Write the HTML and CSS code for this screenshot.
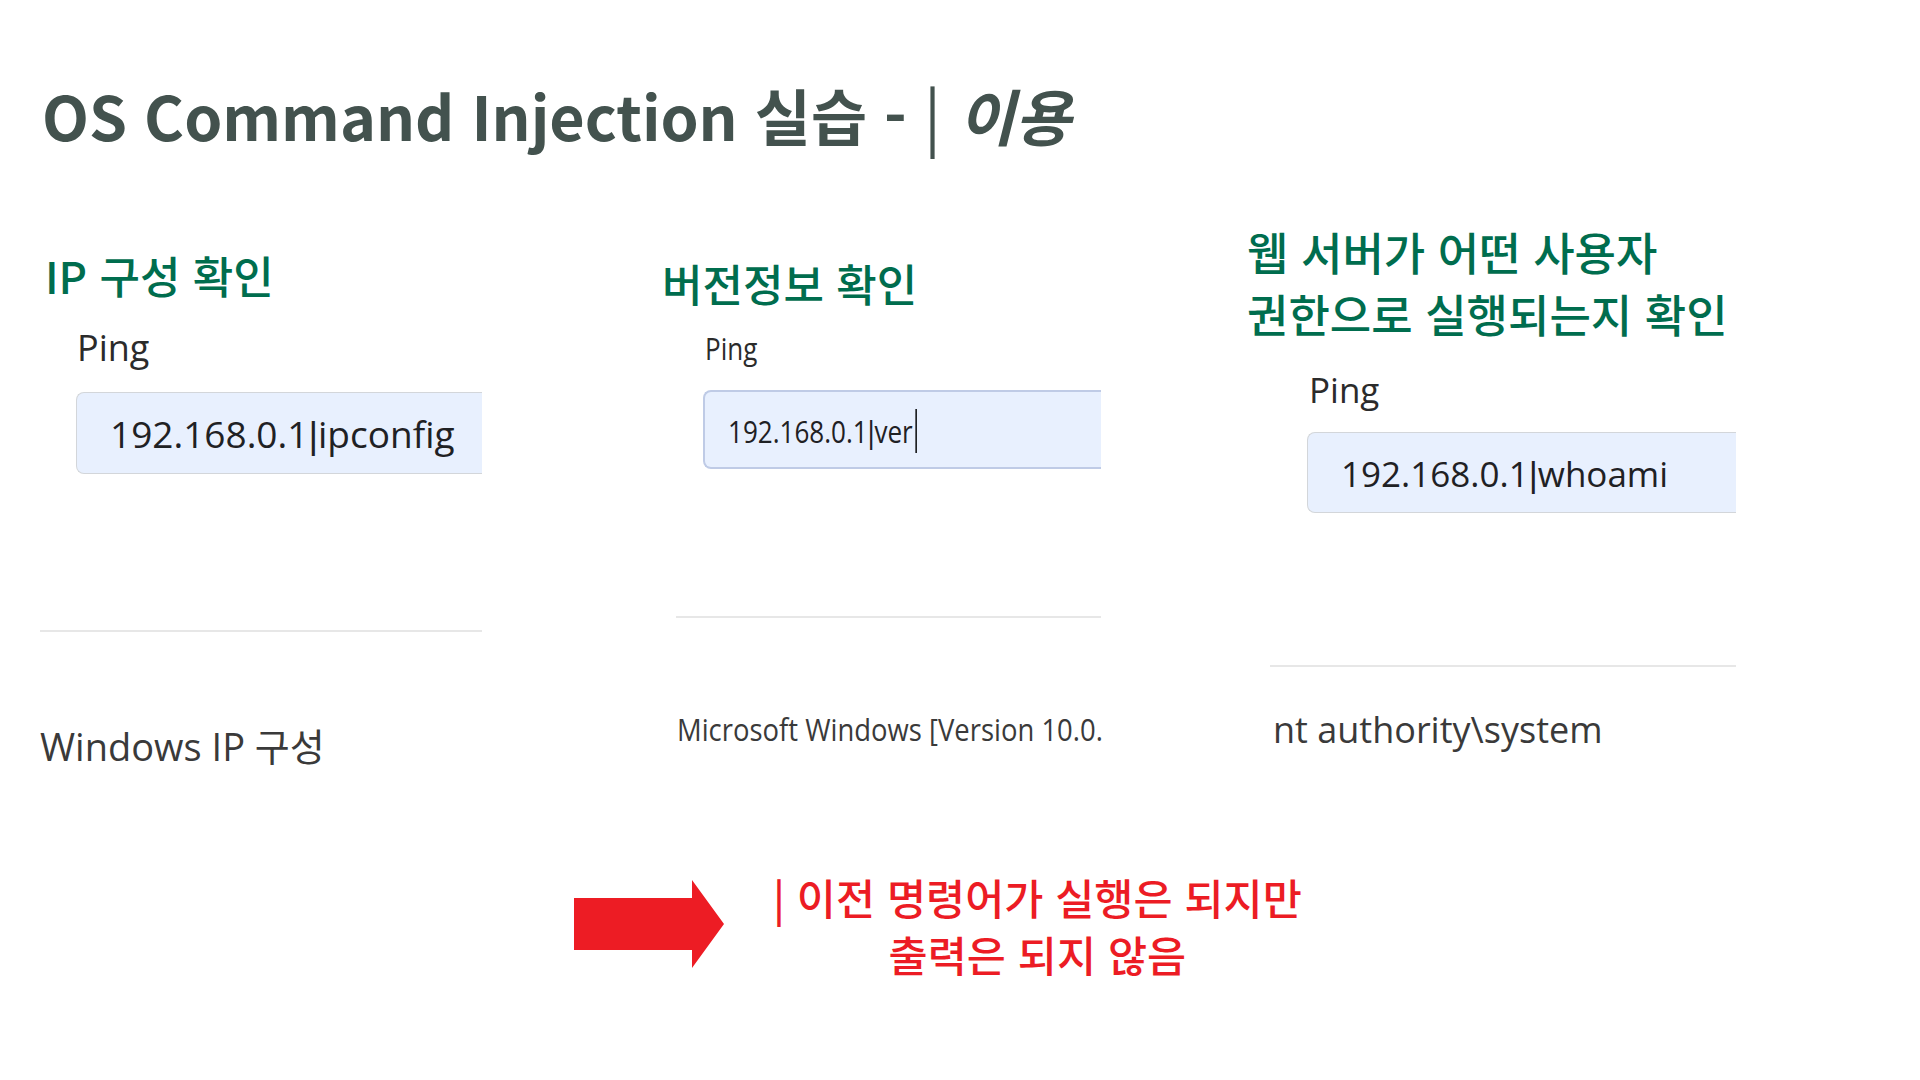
FILE: index.html
```html
<!DOCTYPE html>
<html lang="ko">
<head>
<meta charset="utf-8">
<title>OS Command Injection 실습</title>
<link rel="stylesheet" href="styles.css">
</head>
<body>
<main class="slide">
  <h1 class="title">OS Command Injection 실습 - <span class="title-bar">|</span> <em class="title-em">이용</em></h1>

  <section class="cols">
    <div class="col col-ip">
      <h2 class="heading">IP 구성 확인</h2>
      <div class="shot">
        <div class="label">Ping</div>
        <div class="field"><span class="field-text">192.168.0.1<span class="pipe">|</span>ipconfig</span></div>
        <div class="rule"></div>
        <div class="output">Windows IP 구성</div>
      </div>
    </div>

    <div class="col col-ver">
      <h2 class="heading">버전정보 확인</h2>
      <div class="shot">
        <div class="label">Ping</div>
        <div class="field field-focus"><span class="field-text">192.168.0.1<span class="pipe">|</span>ver<span class="caret"></span></span></div>
        <div class="rule"></div>
        <div class="output">Microsoft Windows [Version 10.0.</div>
      </div>
    </div>

    <div class="col col-who">
      <h2 class="heading">웹 서버가 어떤 사용자<br>권한으로 실행되는지 확인</h2>
      <div class="shot">
        <div class="label">Ping</div>
        <div class="field"><span class="field-text">192.168.0.1<span class="pipe">|</span>whoami</span></div>
        <div class="rule"></div>
        <div class="output">nt authority\system</div>
      </div>
    </div>
  </section>

  <section class="note">
    <svg class="arrow" width="150" height="88" viewBox="0 0 150 88" aria-hidden="true">
      <polygon points="0,18 118,18 118,0 150,44 118,88 118,70 0,70" fill="#ed1c24"/>
    </svg>
    <p class="note-text">| 이전 명령어가 실행은 되지만<br>출력은 되지 않음</p>
  </section>
</main>
</body>
</html>
```

FILE: styles.css
```css
html, body {
  margin: 0;
  padding: 0;
  background: #ffffff;
}

.slide {
  width: 1920px;
  height: 1080px;
  overflow: hidden;
  font-family: "Noto Sans CJK KR", "Noto Sans", sans-serif;
}

.title {
  margin: 73px 0 0 42px;
  font-size: 61px;
  line-height: 80px;
  font-weight: 700;
  color: #43524e;
  white-space: nowrap;
}

.title-bar {
  font-weight: 400;
  font-size: 65px;
}

.title-em {
  font-style: italic;
}

.cols {
  display: flex;
  align-items: flex-start;
  padding-left: 40px;
  height: 713px;
}

.col {
  flex: none;
}

.col-ip {
  width: 442px;
  margin-top: 87px;
}

.col-ver {
  width: 440px;
  margin-left: 179px;
  margin-top: 95px;
}

.col-who {
  width: 489px;
  margin-left: 146px;
  margin-top: 66px;
}

.heading {
  margin: 0;
  font-size: 44px;
  line-height: 66px;
  font-weight: 500;
  color: #006d4e;
  white-space: nowrap;
}

.col-ip .heading { padding-left: 5px; }
.col-ver .heading { padding-left: 1px; }
.col-who .heading {
  font-size: 45px;
  line-height: 62px;
}

.shot {
  font-family: "Open Sans", "Noto Sans CJK KR", sans-serif;
}

.label {
  color: #2b2b2b;
}

.field {
  display: flex;
  align-items: center;
  box-sizing: border-box;
  background: #e8f0fe;
  border: 1px solid #d3d6da;
  border-right: 0;
  border-radius: 8px 0 0 8px;
}

.field-focus {
  border-color: #bfcbe6;
  border-width: 2px;
}

.field-text {
  color: #1f2124;
  white-space: nowrap;
}

.pipe {
  font-family: "Liberation Sans", sans-serif;
}

.rule {
  height: 2px;
  background: #e7e7e7;
}

.output {
  color: #3a3a3a;
  white-space: nowrap;
}

/* column 1 */
.col-ip .label {
  margin: 22px 0 0 37px;
  font-size: 36px;
  line-height: 36px;
}
.col-ip .field {
  margin: 26px 0 0 36px;
  height: 82px;
  padding: 2px 0 0 33px;
}
.col-ip .field-text {
  font-size: 37px;
  line-height: 37px;
}
.col-ip .rule {
  margin-top: 156px;
}
.col-ip .output {
  margin: 95px 0 0 0;
  font-size: 38px;
  line-height: 38px;
}

/* column 2 (narrower screenshot) */
.col-ver .label,
.col-ver .field-text {
  transform: scaleX(0.84);
  transform-origin: left center;
}
.col-ver .output {
  transform: scaleX(0.885);
  transform-origin: left center;
}
.col-ver .label {
  margin: 17px 0 0 44px;
  font-size: 31px;
  line-height: 31px;
}
.col-ver .field {
  margin: 26px 0 0 42px;
  height: 79px;
  padding: 3px 0 0 23px;
}
.col-ver .field-text {
  display: inline-block;
  font-size: 31px;
  line-height: 31px;
}
.caret {
  display: inline-block;
  width: 2px;
  height: 44px;
  margin-left: 3px;
  vertical-align: -10px;
  background: #1f2124;
}
.col-ver .rule {
  margin: 147px 0 0 15px;
}
.col-ver .output {
  margin: 96px 0 0 16px;
  font-size: 31px;
  line-height: 31px;
}

/* column 3 */
.col-who .label {
  margin: 27px 0 0 62px;
  font-size: 35px;
  line-height: 35px;
}
.col-who .field {
  margin: 25px 0 0 60px;
  height: 81px;
  padding: 2px 0 0 33px;
}
.col-who .field-text {
  font-size: 35px;
  line-height: 35px;
}
.col-who .rule {
  margin: 152px 0 0 23px;
}
.col-who .output {
  margin: 45px 0 0 26px;
  font-size: 36px;
  line-height: 36px;
}

/* bottom note */
.note {
  display: flex;
  align-items: flex-start;
  margin-left: 574px;
}

.arrow {
  flex: none;
  display: block;
  margin-top: 12px;
}

.note-text {
  margin: 0 0 0 49px;
  font-size: 42.5px;
  line-height: 57px;
  font-weight: 500;
  color: #ec1c24;
  text-align: center;
  white-space: nowrap;
}
```
